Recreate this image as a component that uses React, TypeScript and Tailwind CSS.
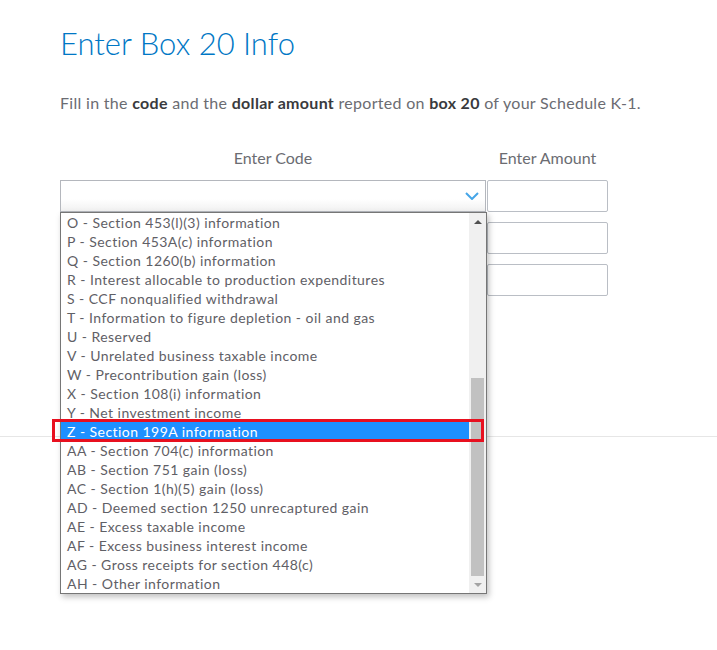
const codes = [
  "O - Section 453(l)(3) information",
  "P - Section 453A(c) information",
  "Q - Section 1260(b) information",
  "R - Interest allocable to production expenditures",
  "S - CCF nonqualified withdrawal",
  "T - Information to figure depletion - oil and gas",
  "U - Reserved",
  "V - Unrelated business taxable income",
  "W - Precontribution gain (loss)",
  "X - Section 108(i) information",
  "Y - Net investment income",
  "Z - Section 199A information",
  "AA - Section 704(c) information",
  "AB - Section 751 gain (loss)",
  "AC - Section 1(h)(5) gain (loss)",
  "AD - Deemed section 1250 unrecaptured gain",
  "AE - Excess taxable income",
  "AF - Excess business interest income",
  "AG - Gross receipts for section 448(c)",
  "AH - Other information",
];

function CodeList() {
  return (
    <div className="absolute left-0 top-[32px] z-10 w-[427px] border border-[#767676] bg-white shadow-[2px_3px_6px_rgba(0,0,0,0.25)]">
      <div className="flex">
        <ul className="flex-1">
          {codes.map((c) => (
            <li
              key={c}
              className={
                c.startsWith("Z ")
                  ? "h-[19px] bg-[#1e90ff] pl-[6px] text-[14px] leading-[19px] tracking-[0.45px] text-white"
                  : "h-[19px] pl-[6px] text-[14px] leading-[19px] tracking-[0.45px] text-[#5f6066]"
              }
            >
              {c}
            </li>
          ))}
        </ul>
        {/* scrollbar */}
        <div className="flex w-[17px] flex-col items-center bg-[#f0f0f0]">
          <div className="flex h-[17px] items-center justify-center">
            <div className="h-0 w-0 border-x-[4px] border-b-[4px] border-x-transparent border-b-[#505050]" />
          </div>
          <div className="mt-[148px] h-[198px] w-[13px] bg-[#c1c1c1]" />
          <div className="mt-auto flex h-[17px] items-center justify-center">
            <div className="h-0 w-0 border-x-[4px] border-t-[4px] border-x-transparent border-t-[#a3a3a3]" />
          </div>
        </div>
      </div>
      {/* highlight marker around the selected code */}
      <div className="pointer-events-none absolute left-[-9px] top-[206px] h-[23px] w-[432px] border-[3px] border-[#e8101f]" />
    </div>
  );
}

export default function App() {
  return (
    <div
      className="relative h-[650px] w-[717px] overflow-hidden bg-white"
      style={{ fontFamily: "Lato, 'Open Sans', sans-serif" }}
    >
      <div className="pl-[60px] pt-[23px]">
        <h1 className="text-[31px] font-light leading-[40px] text-[#0077c5]">
          Enter Box 20 Info
        </h1>
        <p className="mt-[28px] text-[16px] leading-[24px] tracking-[0.3px] text-[#6b6c72]">
          Fill in the <b className="text-[#393a3d]">code</b> and the{" "}
          <b className="text-[#393a3d]">dollar amount</b> reported on{" "}
          <b className="text-[#393a3d]">box 20</b> of your Schedule K-1.
        </p>

        <div className="mt-[33px] flex">
          <div className="w-[426px]">
            <div className="text-center text-[16px] leading-[20px] text-[#6b6c72]">
              Enter Code
            </div>
            <div className="relative mt-[12px]">
              <div className="flex h-[32px] items-center justify-end border border-[#b4b7bd] bg-gradient-to-b from-white from-60% to-[#f1f1f1] pr-[6px]">
                <svg width="14" height="8" viewBox="0 0 14 8" fill="none">
                  <path d="M1 1l6 6 6-6" stroke="#46a6e8" strokeWidth="2" />
                </svg>
              </div>
              <CodeList />
            </div>
          </div>

          <div className="ml-[1px] w-[121px]">
            <div className="text-center text-[16px] leading-[20px] text-[#6b6c72]">
              Enter Amount
            </div>
            <div className="mt-[12px] flex flex-col gap-[10px]">
              <div className="h-[32px] rounded-[2px] border border-[#babec5]" />
              <div className="h-[32px] rounded-[2px] border border-[#babec5]" />
              <div className="h-[32px] rounded-[2px] border border-[#babec5]" />
            </div>
          </div>
        </div>
      </div>

      <div className="mt-[140px] h-px bg-[#e6e6e6]" />
    </div>
  );
}
